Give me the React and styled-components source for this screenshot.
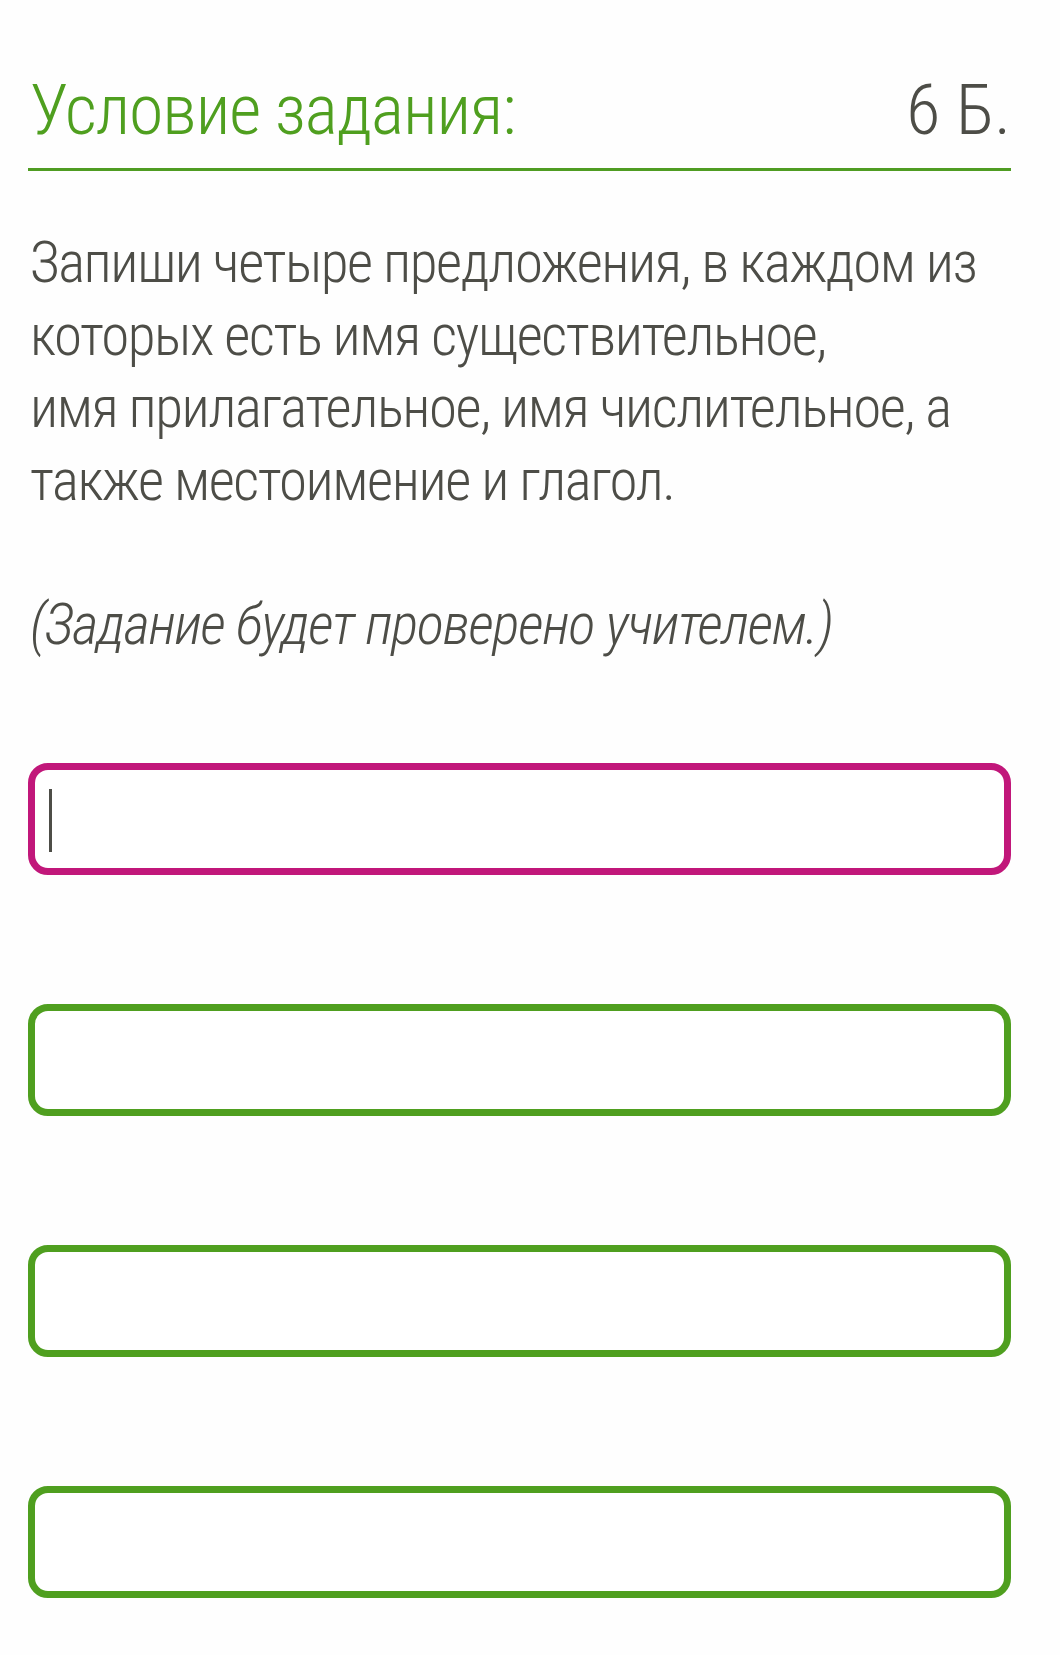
import React from "react";
import styled, { createGlobalStyle } from "styled-components";

const GlobalStyle = createGlobalStyle`
  html, body {
    margin: 0;
    padding: 0;
    background: #fefefe;
  }
  body {
    font-family: Roboto, "Liberation Sans", sans-serif;
  }
`;

const Page = styled.div`
  width: 1060px;
  min-height: 1655px;
  box-sizing: border-box;
  padding: 69px 49px 0 28px;
  font-family: Roboto, "Liberation Sans", sans-serif;
  font-stretch: 75%;
  font-weight: 300;
  color: #4d4d47;
`;

const Header = styled.div`
  display: flex;
  justify-content: space-between;
  align-items: baseline;
  padding-bottom: 17px;
  border-bottom: 3px solid #4f9c22;
`;

const Title = styled.h1`
  margin: 0 0 0 2px;
  font-size: 70px;
  line-height: 82px;
  font-weight: 300;
  letter-spacing: -1.1px;
  color: #4f9f1f;
`;

const Points = styled.span`
  font-size: 70px;
  line-height: 82px;
  color: #4d4d47;
`;

const Text = styled.p`
  margin: ${(p) => p.$top}px 0 0 2px;
  font-size: 57px;
  line-height: 72.5px;
  letter-spacing: ${(p) => (p.$italic ? "-1.3px" : "-1.45px")};
  white-space: nowrap;
  font-style: ${(p) => (p.$italic ? "italic" : "normal")};
`;

const Answers = styled.div`
  display: flex;
  flex-direction: column;
  gap: 129px;
  margin-top: 101px;
`;

const AnswerBox = styled.div`
  height: 112px;
  box-sizing: border-box;
  border: 7px solid ${(p) => (p.$active ? "#c1177a" : "#4f9f1f")};
  border-radius: 20px;
  background: #fff;
  padding: 19px 0 0 14px;
`;

const Caret = styled.span`
  display: block;
  width: 3px;
  height: 63px;
  background: #4d4d47;
`;

export default function App() {
  return (
    <>
      <GlobalStyle />
      <Page>
        <Header>
          <Title>Условие задания:</Title>
          <Points>6 Б.</Points>
        </Header>
        <Text $top={56}>
          Запиши четыре предложения, в каждом из
          <br />
          которых есть имя существительное,
          <br />
          имя прилагательное, имя числительное, а
          <br />
          также местоимение и глагол.
        </Text>
        <Text $top={72} $italic>
          (Задание будет проверено учителем.)
        </Text>
        <Answers>
          <AnswerBox $active>
            <Caret />
          </AnswerBox>
          <AnswerBox />
          <AnswerBox />
          <AnswerBox />
        </Answers>
      </Page>
    </>
  );
}
